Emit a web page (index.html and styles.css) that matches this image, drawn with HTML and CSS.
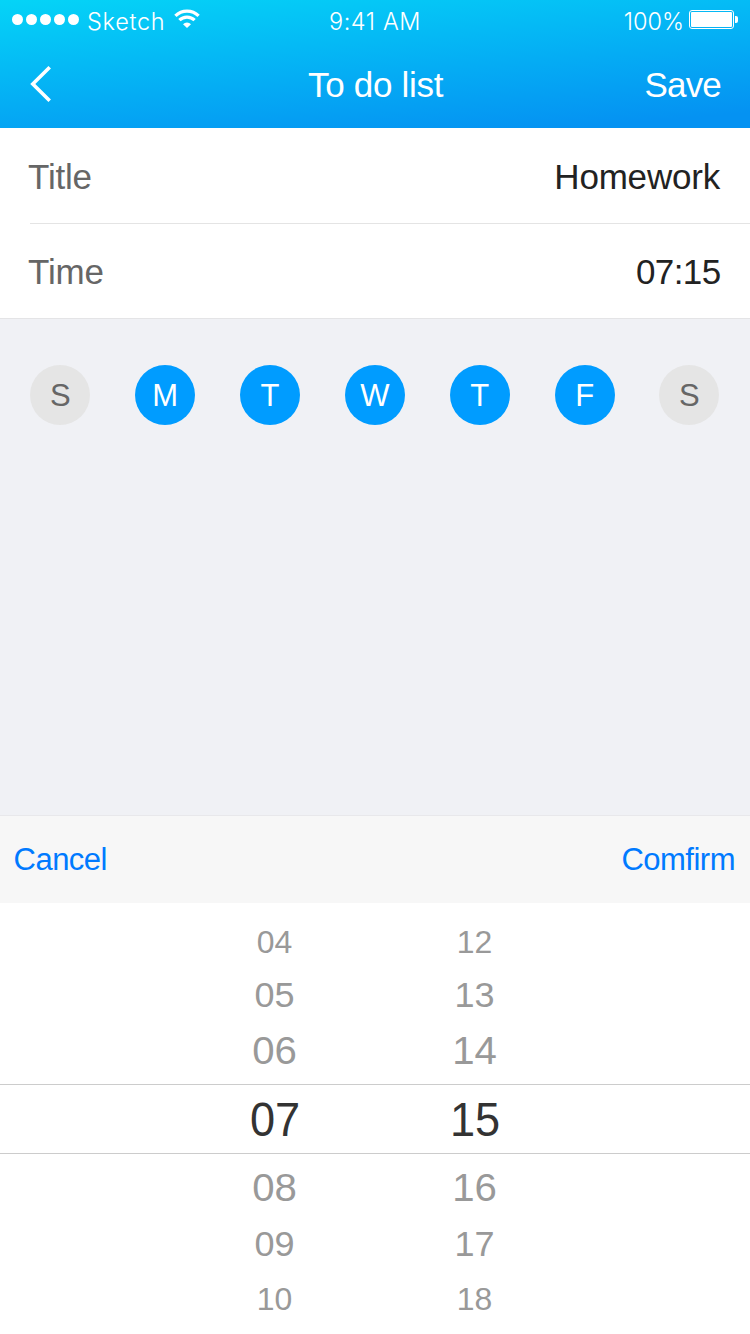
FILE: index.html
```html
<!DOCTYPE html>
<html lang="en">
<head>
<meta charset="utf-8">
<title>To do list</title>
<link rel="stylesheet" href="styles.css">
</head>
<body>
<div class="screen">
  <header class="header">
    <div class="status">
      <div class="status-left">
        <svg class="signal" width="68" height="12" viewBox="0 0 68 12" fill="#fff"><circle cx="5.5" cy="5.5" r="5.5"/><circle cx="19.5" cy="5.5" r="5.5"/><circle cx="33.5" cy="5.5" r="5.5"/><circle cx="47.5" cy="5.5" r="5.5"/><circle cx="61.5" cy="5.5" r="5.5"/></svg>
        <span class="carrier">Sketch</span>
        <svg class="wifi" width="26" height="19" viewBox="0 0 26 19" fill="none" stroke="#fff"><path d="M1.4 6.8a16.500 16.500 0 0 1 23.200 0" stroke-width="3.300"/><path d="M5.400 11.200a10.800 10.800 0 0 1 15.200 0" stroke-width="3.300"/><path d="M9 15.200a5.600 5.600 0 0 1 8 0L13 19z" fill="#fff" stroke="none"/></svg>
      </div>
      <span class="clock">9:41 AM</span>
      <div class="status-right">
        <span class="percent">100%</span>
        <svg class="battery" width="49" height="19" viewBox="0 0 49 19" fill="#fff"><rect x=".5" y=".5" width="44" height="18" rx="2.5" fill="none" stroke="#fff"/><rect x="2" y="2" width="41" height="15" rx="1"/><path d="M46 6h1q2 0 2 2v3q0 2-2 2h-1z"/></svg>
      </div>
    </div>
    <nav class="nav">
      <svg class="back" width="22" height="36" viewBox="0 0 22 36" fill="none" stroke="#fff" stroke-width="3.6"><path d="M19.7 1.3 2.8 18l16.9 16.7"/></svg>
      <h1 class="nav-title">To do list</h1>
      <span class="save">Save</span>
    </nav>
  </header>
  <main class="content">
    <div class="form">
      <div class="row"><span class="label">Title</span><span class="value">Homework</span></div>
      <div class="divider"></div>
      <div class="row"><span class="label">Time</span><span class="value digits">07:15</span></div>
    </div>
    <div class="days">
      <span class="day">S</span><span class="day on">M</span><span class="day on">T</span><span class="day on">W</span><span class="day on">T</span><span class="day on">F</span><span class="day">S</span>
    </div>
  </main>
  <section class="sheet">
    <div class="toolbar"><span>Cancel</span><span>Comfirm</span></div>
    <div class="picker">
      <div class="line far"><span>04</span><span>12</span></div>
      <div class="line mid"><span>05</span><span>13</span></div>
      <div class="line near"><span>06</span><span>14</span></div>
      <div class="line current"><span>07</span><span>15</span></div>
      <div class="line near"><span>08</span><span>16</span></div>
      <div class="line mid"><span>09</span><span>17</span></div>
      <div class="line far last"><span>10</span><span>18</span></div>
    </div>
  </section>
</div>
</body>
</html>
```
FILE: styles.css
```css
* { box-sizing: border-box; }
body { margin: 0; font-family: "Liberation Sans", Arial, sans-serif; }
svg { display: block; flex: none; }
.screen { width: 750px; height: 1334px; display: flex; flex-direction: column; background: #f0f1f5; overflow: hidden; }

.header { height: 128px; flex: none; color: #fff; background: linear-gradient(175deg, #05d4f7 0%, #0592f2 92%); }
.status { height: 40px; display: grid; grid-template-columns: 1fr auto 1fr; font-family: Inter, sans-serif; font-size: 23.5px; line-height: 44px; letter-spacing: 0.6px; font-weight: 350; }
.status-left { display: flex; padding-left: 12px; }
.signal { margin-top: 14px; }
.carrier { margin-left: 7px; width: 80px; letter-spacing: 0.7px; }
.wifi { margin: 9px 0 0 7px; }
.status-right { display: flex; justify-content: flex-end; padding-right: 12px; }
.percent { margin-right: 5px; letter-spacing: 0; }
.battery { margin-top: 10px; }
.nav { height: 88px; display: grid; grid-template-columns: 1fr auto 1fr; align-items: center; padding: 0 29px 2px 30px; font-size: 35px; line-height: 86px; letter-spacing: -0.3px; }
.nav-title { margin: 0; font-size: 35px; font-weight: 400; padding-top: 2px; }
.save { text-align: right; padding-top: 2px; letter-spacing: -0.8px; }

.content { flex: 1; }
.form { height: 191px; background: #fff; border-bottom: 1px solid #e4e4e6; }
.row { height: 95px; padding: 2px 30px 0 28px; display: flex; justify-content: space-between; align-items: center; font-size: 35px; letter-spacing: -0.2px; }
.label { color: #666; }
.value { color: #222; }
.digits { letter-spacing: -0.6px; margin-right: -0.6px; }
.divider { height: 1px; margin-left: 30px; background: #e4e4e4; }
.form .row:last-child { height: 94px; padding-top: 1px; }
.days { display: flex; justify-content: space-between; padding: 46px 30.5px 0 30.4px; }
.day { width: 60px; height: 60px; border-radius: 50%; background: #e5e5e5; color: #666; font-size: 31px; line-height: 62px; text-align: center; }
.day.on { background: #009cff; color: #fff; }

.sheet { flex: none; }
.toolbar { height: 88px; border-top: 1px solid #e8e8eb; background: #f7f7f7; color: #007aff; display: flex; justify-content: space-between; align-items: center; padding: 1px 15px 0 13.5px; font-size: 31px; letter-spacing: -0.5px; font-variant-ligatures: none; }
.picker { height: 431px; padding-top: 13px; background: #fff; color: #999; }
.line { display: flex; justify-content: center; align-items: center; }
.line span { width: 200px; text-align: center; }
.far span, .mid span, .near span { transform: translateX(-0.5px) scaleX(1.03); }
.far { height: 52px; font-size: 31px; padding-top: 1px; }
.mid { height: 53px; font-size: 35px; }
.near { height: 59px; font-size: 39px; padding-top: 1px; }
.current { height: 70px; margin: 4px 0; padding-top: 1px; font-size: 48px; color: #333; border: solid #ccc; border-width: 1px 0; }
.current span { transform: scaleX(0.94); }
.last { height: 58px; }
```
